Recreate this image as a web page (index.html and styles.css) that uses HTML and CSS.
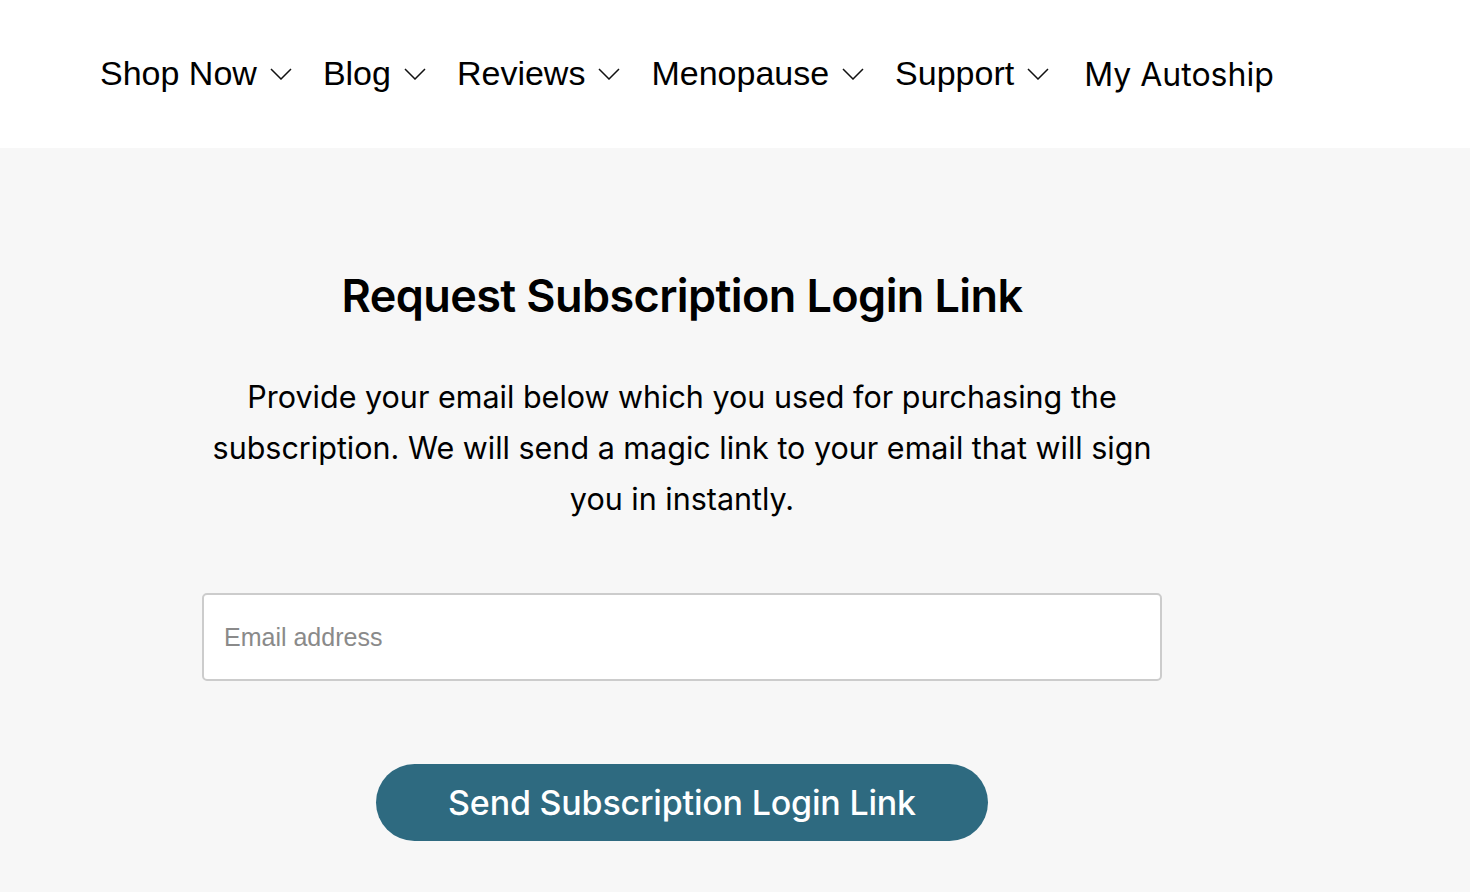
FILE: index.html
```html
<!DOCTYPE html>
<html lang="en">
<head>
<meta charset="utf-8">
<title>Request Subscription Login Link</title>
<link rel="stylesheet" href="styles.css">
</head>
<body>
<header class="site-header">
  <nav class="main-nav">
    <a class="nav-item" href="#">Shop Now <svg class="chev" viewBox="0 0 22 12" width="22" height="12"><path d="M1 1 L11 11 L21 1" fill="none" stroke="#111" stroke-width="1.5"/></svg></a>
    <a class="nav-item" href="#">Blog <svg class="chev" viewBox="0 0 22 12" width="22" height="12"><path d="M1 1 L11 11 L21 1" fill="none" stroke="#111" stroke-width="1.5"/></svg></a>
    <a class="nav-item" href="#">Reviews <svg class="chev" viewBox="0 0 22 12" width="22" height="12"><path d="M1 1 L11 11 L21 1" fill="none" stroke="#111" stroke-width="1.5"/></svg></a>
    <a class="nav-item" href="#">Menopause <svg class="chev" viewBox="0 0 22 12" width="22" height="12"><path d="M1 1 L11 11 L21 1" fill="none" stroke="#111" stroke-width="1.5"/></svg></a>
    <a class="nav-item" href="#">Support <svg class="chev" viewBox="0 0 22 12" width="22" height="12"><path d="M1 1 L11 11 L21 1" fill="none" stroke="#111" stroke-width="1.5"/></svg></a>
    <a class="nav-item nav-plain" href="#">My Autoship</a>
  </nav>
</header>
<main class="content">
  <section class="login-box">
    <h1 class="title">Request Subscription Login Link</h1>
    <p class="intro">Provide your email below which you used for purchasing the subscription. We will send a magic link to your email that will sign you in instantly.</p>
    <input class="email" type="email" placeholder="Email address">
    <button class="send-btn" type="button">Send Subscription Login Link</button>
  </section>
</main>
</body>
</html>
```
FILE: styles.css
```css
html, body {
  margin: 0;
  padding: 0;
}
body {
  background: #f7f7f7;
  font-family: "Liberation Sans", Arial, sans-serif;
  color: #000;
  height: 892px;
  overflow: hidden;
}
.site-header {
  background: #fff;
  height: 148px;
  display: flex;
  align-items: center;
}
.main-nav {
  display: flex;
  align-items: center;
  gap: 31px;
  padding-left: 100px;
  margin-top: -3px;
}
.nav-item {
  display: flex;
  align-items: center;
  gap: 13px;
  color: #000;
  text-decoration: none;
  font-size: 34px;
  line-height: 40px;
}
.chev {
  display: block;
  margin-top: 2px;
}
.nav-plain {
  font-family: Inter, "Liberation Sans", sans-serif;
  font-size: 32px;
  margin-top: 5px;
  margin-left: 4px;
}
.content {
  padding-top: 120px;
}
.login-box {
  width: 960px;
  margin-left: 202px;
  display: flex;
  flex-direction: column;
  align-items: center;
  font-family: Inter, "Liberation Sans", sans-serif;
}
.title {
  margin: 0;
  font-size: 45px;
  font-weight: 600;
  line-height: 56px;
  letter-spacing: -0.6px;
}
.intro {
  margin: 47px 0 0;
  font-size: 30.5px;
  line-height: 51px;
  text-align: center;
  padding: 0 4px;
}
.email {
  box-sizing: border-box;
  width: 960px;
  height: 88px;
  margin-top: 69px;
  border: 2px solid #cccccc;
  border-radius: 5px;
  background: #fff;
  padding: 0 20px;
  font-family: "Liberation Sans", Arial, sans-serif;
  font-size: 25px;
  color: #333;
  outline: none;
}
.email::placeholder {
  color: #8a8a8a;
}
.send-btn {
  margin-top: 83px;
  width: 612px;
  height: 77px;
  border: none;
  border-radius: 39px;
  background: #2e6a80;
  color: #fff;
  font-family: Inter, "Liberation Sans", sans-serif;
  font-size: 34px;
  font-weight: 500;
  letter-spacing: -0.2px;
  cursor: pointer;
}
```
